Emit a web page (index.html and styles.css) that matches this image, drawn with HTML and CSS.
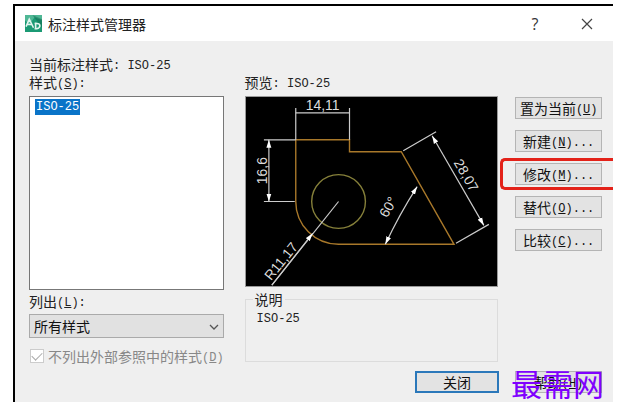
FILE: index.html
```
<!DOCTYPE html>
<html lang="zh-CN">

<head>
	<meta charset="UTF-8">
	<title>标注样式管理器</title>
	<link rel="stylesheet" href="styles.css">
</head>

<body>
	<div class="dialog">
		<header class="title-bar">
			<svg class="logo" viewBox="0 0 16 16">
				<rect width="16" height="16" fill="#1b9a74" />
				<path d="M0 0h16v5L9 2 4 9 0 5z" fill="#4fb795" />
				<path d="M7 0 16 12V4z" fill="#12694f" opacity=".5" />
				<path d="M1 11 4 4l4 8M2 9h4M10 7v6M9 8h2q3 0 3 2t-3 3H9" fill="none" stroke="#e4f5ef" stroke-width="1.5" />
			</svg>
			<h1>标注样式管理器</h1>
			<button class="title-button">?</button>
			<button class="title-button" aria-label="关闭窗口">
				<svg width="12" height="12" viewBox="0 0 12 12">
					<path d="M1 1l10 10M11 1L1 11" fill="none" stroke="#444" stroke-width="1.2" />
				</svg>
			</button>
		</header>

		<main class="content">
			<p class="current">当前标注样式<span class="en">: ISO-25</span></p>
			<div class="columns">
				<section class="col-styles">
					<h2 class="label">样式<span class="en">(<u>S</u>):</span></h2>
					<ul class="style-list">
						<li><span class="en selected">ISO-25</span></li>
					</ul>
					<label class="label filter-label" for="filter">列出<span class="en">(<u>L</u>):</span></label>
					<div class="select-box">
						<select id="filter">
							<option>所有样式</option>
							<option>正在使用的样式</option>
						</select>
						<svg class="chevron" width="10" height="6" viewBox="0 0 10 6">
							<path d="M1 1l4 4 4-4" fill="none" stroke="#555" stroke-width="1.3" />
						</svg>
					</div>
					<div class="check-line">
						<input type="checkbox" id="xref" checked disabled>
						<label for="xref">不列出外部参照中的样式<span class="en">(<u>D</u>)</span></label>
					</div>
				</section>

				<section class="col-preview">
					<h2 class="label">预览<span class="en">: ISO-25</span></h2>
					<div class="preview">
						<svg viewBox="0 0 255 192">
							<defs>
								<marker id="arrow" viewBox="0 0 8 6" markerWidth="8" markerHeight="6" refX="8" refY="3" orient="auto-start-reverse" markerUnits="userSpaceOnUse">
									<path d="M0 0.5L8 3 0 5.5z" fill="#fff" />
								</marker>
							</defs>
							<!-- part outline -->
							<g class="part">
								<path d="M51 44H105V56H157L210 149H94A43 43 0 0 1 51 106Z" />
								<circle cx="94" cy="106" r="27" />
							</g>
							<!-- extension and dimension lines -->
							<g class="dim">
								<path d="M51 12V44M105 12V44M19 44H51M19 106H50M159 55L192 36M212 148L245 129" />
								<path d="M51 17H105" />
								<path d="M24 44V106" marker-start="url(#arrow)" marker-end="url(#arrow)" />
								<path d="M188 40L240 130" marker-start="url(#arrow)" marker-end="url(#arrow)" />
								<path d="M173 91Q155 119 141 149" marker-start="url(#arrow)" marker-end="url(#arrow)" />
								<path d="M94 106L27 190" />
								<path d="M27 190L68 138" marker-end="url(#arrow)" />
							</g>
							<g class="dim-text">
								<text x="78" y="14">14,11</text>
								<text transform="translate(22 75) rotate(-90)">16,6</text>
								<text transform="translate(40 169) rotate(-51)">R11,17</text>
								<text transform="translate(218 82) rotate(60)">28,07</text>
								<text transform="translate(148 114) rotate(-60)">60°</text>
							</g>
						</svg>
					</div>
					<fieldset class="description">
						<legend>说明</legend>
						<p class="en">ISO-25</p>
					</fieldset>
				</section>

				<section class="col-buttons">
					<button class="btn">置为当前<span class="en">(<u>U</u>)</span></button>
					<button class="btn">新建<span class="en">(<u>N</u>)...</span></button>
					<div class="highlight">
						<button class="btn">修改<span class="en">(<u>M</u>)...</span></button>
					</div>
					<button class="btn">替代<span class="en">(<u>O</u>)...</span></button>
					<button class="btn">比较<span class="en">(<u>C</u>)...</span></button>
				</section>
			</div>
			<footer class="bottom">
				<button class="btn btn-close">关闭</button>
				<div class="help">
					<button class="btn">帮助<span class="en">(<u>H</u>)</span></button>
					<span class="watermark">最需网</span>
				</div>
			</footer>
		</main>
	</div>
</body>

</html>
```
FILE: styles.css
```
* {
	box-sizing: border-box;
}

body {
	margin: 0;
	padding: 4px 10px 14px 13px;
	background: #fff;
	color: #222;
	font-family: "Noto Sans CJK SC", sans-serif;
	font-size: 14px;
	line-height: 18px;
}

h1,
h2,
p,
ul {
	margin: 0;
	padding: 0;
	font-size: 14px;
	font-weight: normal;
}

.en {
	font-family: "Liberation Mono", monospace;
	font-size: 12px;
	line-height: 12px;
	vertical-align: 1px;
}

.dialog {
	border-top: 2px solid #000;
	border-left: 2px solid #000;
	background: #efefef;
}

.title-bar {
	display: flex;
	align-items: center;
	height: 35px;
	padding: 0 10px;
	background: #fff;
}

.logo {
	width: 17px;
	height: 17px;
	margin-right: 6px;
}

.title-bar h1 {
	flex: 1;
}

.title-button {
	display: flex;
	align-items: center;
	justify-content: center;
	width: 32px;
	height: 24px;
	margin-left: 20px;
	padding: 0;
	border: none;
	background: none;
	color: #333;
	font-family: "Open Sans", sans-serif;
	font-size: 16px;
}

.content {
	padding: 14px 11px 9px 14px;
}

.columns {
	display: flex;
}

.label {
	display: block;
	height: 23px;
	line-height: 18px;
}

.col-styles {
	flex: 194;
	margin-right: 21px;
}

.style-list {
	height: 194px;
	padding: 2px 5px;
	border: 1px solid #777;
	background: #fff;
	list-style: none;
}

.style-list li {
	display: flex;
}

.selected {
	height: 16px;
	padding: 0 1px;
	background: #0a74c8;
	color: #fff;
	line-height: 16px;
}

.filter-label {
	height: 24px;
	padding-top: 2px;
}

.select-box {
	position: relative;
}

.select-box select {
	display: block;
	width: 100%;
	height: 24px;
	padding: 0 4px;
	border: 1px solid #aaa;
	border-radius: 0;
	background: #e1e1e1;
	color: #111;
	font: inherit;
	appearance: none;
}

.chevron {
	position: absolute;
	top: 10px;
	right: 5px;
}

.check-line {
	display: flex;
	align-items: center;
	margin-top: 9px;
	color: #888;
	white-space: nowrap;
}

.check-line input {
	display: flex;
	align-items: center;
	justify-content: center;
	width: 14px;
	height: 14px;
	margin: 0 4px 0 1px;
	border: 1px solid #ccc;
	background: #fff;
	appearance: none;
}

.check-line input:checked::before {
	content: "";
	width: 9px;
	height: 5px;
	margin-bottom: 3px;
	border-left: 1px solid #aaa;
	border-bottom: 1px solid #aaa;
	transform: rotate(-45deg);
}

.col-preview {
	flex: 255;
	margin-right: 17px;
}

.preview {
	background: #000;
	outline: 1px solid #999;
	outline-offset: -1px;
}

.preview svg {
	display: block;
	width: 100%;
}

.part {
	fill: none;
	stroke: #a8782a;
	stroke-width: 1.4;
}

.part circle {
	stroke: #86803a;
}

.dim {
	fill: none;
	stroke: #ccc;
	stroke-width: 1.2;
}

.dim-text {
	fill: #ddd;
	font-family: "Liberation Sans", sans-serif;
	font-size: 14px;
	text-anchor: middle;
}

.description {
	height: 72px;
	margin: 3px 0 0;
	padding: 5px 11px;
	border: 1px solid #dcdcdc;
}

.description legend {
	margin-left: -4px;
	padding: 0 2px;
}

.col-buttons {
	display: flex;
	flex-direction: column;
	flex: 87;
	gap: 11px;
	padding-top: 24px;
}

.btn {
	display: block;
	width: 100%;
	height: 22px;
	padding: 0;
	border: 1px solid #b4b4b4;
	background: #e3e3e3;
	color: #111;
	font: inherit;
	line-height: 18px;
	white-space: nowrap;
}

.btn .en {
	line-height: 12px;
}

.highlight {
	position: relative;
}

.highlight::after {
	content: "";
	position: absolute;
	top: -5px;
	right: -11px;
	bottom: -5px;
	left: -15px;
	border: 3px solid #e32219;
	border-right: none;
	border-radius: 5px 0 0 5px;
	pointer-events: none;
}

.bottom {
	display: flex;
	justify-content: flex-end;
	gap: 16px;
	margin-top: 6px;
}

.btn-close {
	width: 84px;
	border: 2px solid #2b78ba;
}

.help {
	position: relative;
	width: 87px;
}

.watermark {
	position: absolute;
	top: -4px;
	left: -4px;
	color: #8000ff;
	font-size: 31px;
	line-height: 31px;
	white-space: nowrap;
	pointer-events: none;
}
```
